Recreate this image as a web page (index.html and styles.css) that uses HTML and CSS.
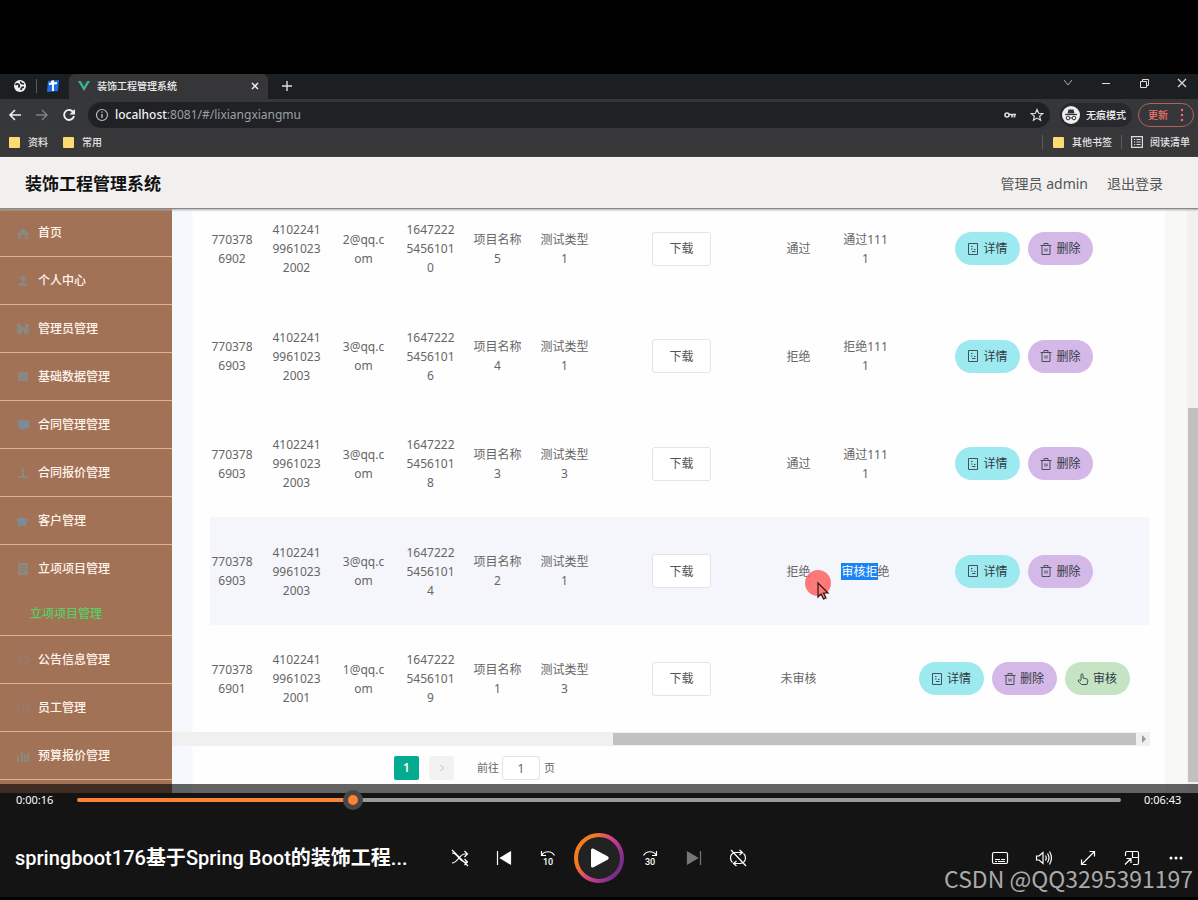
FILE: index.html
```html
<!DOCTYPE html>
<html lang="zh-CN">
<head>
<meta charset="utf-8">
<title>装饰工程管理系统</title>
<link rel="stylesheet" href="styles.css">
</head>
<body>
<div class="player">
  <div class="frame">
    <div class="tabs">
      <svg class="i14 tab-icon" viewBox="0 0 14 14"><circle cx="7" cy="7" r="6" fill="#eee"/><path d="M2.500 6c1-2 3-1 3.500 0s1 2-1 2M8 2.500c-1 2 1 2 3 2.500M8 11c0-2 1-3 3-3" stroke="#222" stroke-width="1.700" fill="none"/></svg>
      <span class="sep"></span>
      <svg class="i14 tab-icon" viewBox="0 0 14 14"><path d="M2 2l11-1-1 11-11 1z" fill="#1f6fe8"/><path d="M3 5l8-1M7 2v10M5 3l3-1" stroke="#fff" stroke-width="2" fill="none"/></svg>
      <div class="tab">
        <svg class="i14" viewBox="0 0 14 14"><path d="M1 2l6 10 6-10h-3L7 7 4 2z" fill="#41b883"/><path d="M3.500 2L7 8l3.500-6H8.500L7 4.500 5.500 2z" fill="#35495e"/></svg>
        <span class="tab-title">装饰工程管理系统</span>
        <button class="ib" aria-label="关闭标签页"><svg class="i12" viewBox="0 0 12 12"><path d="M3 3l6 6M9 3l-6 6" stroke="#eee" stroke-width="1.500"/></svg></button>
      </div>
      <button class="ib newtab" aria-label="新标签页"><svg class="i12" viewBox="0 0 12 12"><path d="M6 1v10M1 6h10" stroke="#ddd" stroke-width="1.400"/></svg></button>
      <div class="win">
        <button class="ib" aria-label="搜索标签页"><svg class="i12" viewBox="0 0 12 12"><path d="M2 3l4 5 4-5" stroke="#aaa" fill="none"/></svg></button>
        <button class="ib" aria-label="最小化"><svg class="i12" viewBox="0 0 12 12"><path d="M2 6.500h8" stroke="#ddd"/></svg></button>
        <button class="ib" aria-label="还原"><svg class="i12" viewBox="0 0 12 12"><path d="M2.500 4.500h6v6h-6zM4.500 4V2.500h6v6H9" stroke="#ddd" fill="none"/></svg></button>
        <button class="ib" aria-label="关闭"><svg class="i12" viewBox="0 0 12 12"><path d="M2 2l8 8M10 2l-8 8" stroke="#ddd" stroke-width="1.200"/></svg></button>
      </div>
    </div>
    <div class="toolbar">
      <button class="ib nav" aria-label="后退"><svg class="i14" viewBox="0 0 14 14"><path d="M13 7H2M7 2L2 7l5 5" stroke="#eee" stroke-width="1.600" fill="none"/></svg></button>
      <button class="ib nav" aria-label="前进"><svg class="i14" viewBox="0 0 14 14"><path d="M1 7h11M7 2l5 5-5 5" stroke="#808285" stroke-width="1.400" fill="none"/></svg></button>
      <button class="ib nav" aria-label="刷新"><svg class="i14" viewBox="0 0 14 14"><path d="M11.500 4.500A5 5 0 1 0 12 8" stroke="#eee" stroke-width="1.900" fill="none"/><path d="M13 1v5.500H7.500z" fill="#eee"/></svg></button>
      <div class="omni">
        <svg class="i14" viewBox="0 0 14 14"><circle cx="7" cy="7" r="5.500" stroke="#bbb" stroke-width="1.200" fill="none"/><path d="M7 6v4M7 3.500v1.300" stroke="#bbb" stroke-width="1.400"/></svg>
        <span class="url"><b>localhost</b>:8081/#/lixiangxiangmu</span>
        <svg class="i12" viewBox="0 0 12 12"><circle cx="3" cy="6" r="2" stroke="#ddd" stroke-width="1.600" fill="none"/><path d="M5 5.500h7M8 6v2.500M10.500 6v2.500" stroke="#ddd" stroke-width="1.600"/></svg>
        <svg class="i14 star" viewBox="0 0 14 14"><path d="M7 1.500l1.600 3.800 4.100.3-3.100 2.700 1 4L7 10.100l-3.600 2.200 1-4L1.300 5.600l4.100-.3z" stroke="#ddd" stroke-width="1.200" fill="none"/></svg>
      </div>
      <div class="incog">
        <svg class="i18" viewBox="0 0 18 18"><circle cx="9" cy="9" r="9" fill="#eee"/><path d="M3 8.500h12" stroke="#333" stroke-width="1.200"/><path d="M5.500 7.500l1-4h5l1 4z" fill="#333"/><circle cx="6" cy="12" r="1.800" stroke="#333" fill="none"/><circle cx="12" cy="12" r="1.800" stroke="#333" fill="none"/><path d="M8 12h2" stroke="#333"/></svg>
        <span>无痕模式</span>
      </div>
      <button class="update">更新<svg class="dots" viewBox="0 0 4 14"><circle cx="2" cy="2" r="1.200"/><circle cx="2" cy="7" r="1.200"/><circle cx="2" cy="12" r="1.200"/></svg></button>
    </div>
    <div class="marks">
      <a href="#"><i class="folder"></i>资料</a>
      <a href="#"><i class="folder"></i>常用</a>
      <span class="sep push"></span>
      <a href="#" class="other"><i class="folder"></i>其他书签</a>
      <span class="sep"></span>
      <a href="#" class="read"><svg class="i12" viewBox="0 0 12 12"><path d="M.6.6h10.800v10.800H.6zM3 3.500h1.200M5.500 3.500H9.500M3 6h1.200M5.500 6H9.500M3 8.500h1.200M5.500 8.500H9.500" stroke="#ddd" stroke-width="1.200" fill="none"/></svg>阅读清单</a>
    </div>
    <header class="head">
      <h1>装饰工程管理系统</h1>
      <span class="who">管理员 admin</span>
      <a href="#">退出登录</a>
    </header>
    <div class="body">
      <nav class="side">
        <a href="#"><svg viewBox="0 0 12 12"><path d="M6 1l6 6-1 1v4H8V8H4v4H1V8L0 7z"/></svg>首页</a>
        <a href="#"><svg viewBox="0 0 12 12"><circle cx="6" cy="3.500" r="2.800"/><path d="M1 11c0-5 10-5 10 0z"/></svg>个人中心</a>
        <a href="#"><svg viewBox="0 0 12 12"><path d="M0 1h4v3h4V1h4v3h-1v2h1v5H7V8H5v3H0V6h1V4H0z"/></svg>管理员管理</a>
        <a href="#"><svg viewBox="0 0 12 12"><path d="M1 1h10v9H1z"/></svg>基础数据管理</a>
        <a href="#"><svg class="blue" viewBox="0 0 12 12"><path d="M1 1h11v8H8v2H4V9H1z"/></svg>合同管理管理</a>
        <a href="#"><svg viewBox="0 0 12 12"><path d="M6 1l3 3H7v5h4v2H1V9h4V4H3z"/></svg>合同报价管理</a>
        <a href="#"><svg class="blue" viewBox="0 0 12 12"><path d="M0 4l6-2 1 2h5L9 7v4H1z"/></svg>客户管理</a>
        <div class="group">
          <a href="#"><svg viewBox="0 0 12 12"><path d="M1 0h10v12H1z"/><path d="M3 3h6M3 6h6M3 9h4" stroke="#9b745d"/></svg>立项项目管理</a>
          <a href="#" class="sub">立项项目管理</a>
        </div>
        <a href="#"><svg class="line" viewBox="0 0 12 12"><path d="M3 2h8v7H8l-2 2-2-2H3zM1 1v8"/></svg>公告信息管理</a>
        <a href="#"><svg class="line" viewBox="0 0 12 12"><circle cx="6" cy="6" r="5.300"/><path d="M6 3v6M4 5h4"/></svg>员工管理</a>
        <a href="#"><svg viewBox="0 0 12 12"><path d="M0 6h2v6H0zM4 1h2v11H4zM7 5h2v7H7zM10 3h2v9h-2z"/></svg>预算报价管理</a>
      </nav>
      <main class="main">
        <div class="panel">
          <table>
            <colgroup><col class="c-phone"><col class="c"><col class="c"><col class="c"><col class="c"><col class="c"><col class="c-file"><col class="c"><col class="c"><col></colgroup>
            <tbody>
              <tr><td class="ph">770378<br>6902</td><td>4102241<br>9961023<br>2002</td><td>2@qq.c<br>om</td><td>1647222<br>5456101<br>0</td><td>项目名称<br>5</td><td>测试类型<br>1</td><td><button class="dl">下载</button></td><td>通过</td><td>通过111<br>1</td><td><div class="ops"><button class="op info"><svg viewBox="0 0 12 12"><path d="M1.500.5h9v11h-9zM4 3.500h1.500M4 6h1.500M5 8.500h3.500M7 6.500h1.500"/></svg>详情</button><button class="op del"><svg viewBox="0 0 12 12"><path d="M.5 2.500h11M4 2.500v-2h4v2M2 2.500v9h8v-9M5 5.500v3M7 5.500v3"/></svg>删除</button></div></td></tr>
              <tr><td class="ph">770378<br>6903</td><td>4102241<br>9961023<br>2003</td><td>3@qq.c<br>om</td><td>1647222<br>5456101<br>6</td><td>项目名称<br>4</td><td>测试类型<br>1</td><td><button class="dl">下载</button></td><td>拒绝</td><td>拒绝111<br>1</td><td><div class="ops"><button class="op info"><svg viewBox="0 0 12 12"><path d="M1.500.5h9v11h-9zM4 3.500h1.500M4 6h1.500M5 8.500h3.500M7 6.500h1.500"/></svg>详情</button><button class="op del"><svg viewBox="0 0 12 12"><path d="M.5 2.500h11M4 2.500v-2h4v2M2 2.500v9h8v-9M5 5.500v3M7 5.500v3"/></svg>删除</button></div></td></tr>
              <tr><td class="ph">770378<br>6903</td><td>4102241<br>9961023<br>2003</td><td>3@qq.c<br>om</td><td>1647222<br>5456101<br>8</td><td>项目名称<br>3</td><td>测试类型<br>3</td><td><button class="dl">下载</button></td><td>通过</td><td>通过111<br>1</td><td><div class="ops"><button class="op info"><svg viewBox="0 0 12 12"><path d="M1.500.5h9v11h-9zM4 3.500h1.500M4 6h1.500M5 8.500h3.500M7 6.500h1.500"/></svg>详情</button><button class="op del"><svg viewBox="0 0 12 12"><path d="M.5 2.500h11M4 2.500v-2h4v2M2 2.500v9h8v-9M5 5.500v3M7 5.500v3"/></svg>删除</button></div></td></tr>
              <tr class="hover"><td class="ph">770378<br>6903</td><td>4102241<br>9961023<br>2003</td><td>3@qq.c<br>om</td><td>1647222<br>5456101<br>4</td><td>项目名称<br>2</td><td>测试类型<br>1</td><td><button class="dl">下载</button></td><td class="pointed">拒绝<svg class="pointer" viewBox="0 0 28 34"><circle cx="13" cy="13" r="13" fill="#f55" fill-opacity=".78"/><path d="M13 13v14l3-3 2.500 5 2.500-1-2.500-5H23z" fill="#f77" stroke="#311" stroke-width="1.200"/></svg></td><td><span class="sel">审核拒</span>绝</td><td><div class="ops"><button class="op info"><svg viewBox="0 0 12 12"><path d="M1.500.5h9v11h-9zM4 3.500h1.500M4 6h1.500M5 8.500h3.500M7 6.500h1.500"/></svg>详情</button><button class="op del"><svg viewBox="0 0 12 12"><path d="M.5 2.500h11M4 2.500v-2h4v2M2 2.500v9h8v-9M5 5.500v3M7 5.500v3"/></svg>删除</button></div></td></tr>
              <tr><td class="ph">770378<br>6901</td><td>4102241<br>9961023<br>2001</td><td>1@qq.c<br>om</td><td>1647222<br>5456101<br>9</td><td>项目名称<br>1</td><td>测试类型<br>3</td><td><button class="dl">下载</button></td><td>未审核</td><td></td><td><div class="ops"><button class="op info"><svg viewBox="0 0 12 12"><path d="M1.500.5h9v11h-9zM4 3.500h1.500M4 6h1.500M5 8.500h3.500M7 6.500h1.500"/></svg>详情</button><button class="op del"><svg viewBox="0 0 12 12"><path d="M.5 2.500h11M4 2.500v-2h4v2M2 2.500v9h8v-9M5 5.500v3M7 5.500v3"/></svg>删除</button><button class="op audit"><svg viewBox="0 0 12 12"><path d="M4 7V1.500q1-1.500 2 0V5l4 1q1 .5.800 2l-.8 3.500H4.500L1 8q0-1.500 1.500-1L4 8"/></svg>审核</button></div></td></tr>
            </tbody>
          </table>
          <div class="hbar"><span class="hthumb"></span><i class="arrow"></i></div>
          <div class="pager">
            <button class="pg on">1</button>
            <button class="pg" aria-label="下一页"><svg viewBox="0 0 8 8"><path d="M2.500 1l3 3-3 3" stroke="#bbb" fill="none"/></svg></button>
            <label for="goto">前往</label><input id="goto" type="text" value="1"><span>页</span>
          </div>
        </div>
        <div class="vbar"><span class="vthumb"></span></div>
      </main>
    </div>
    <div class="shade"></div>
  </div>
  <footer class="controls">
    <div class="seek">
      <span class="time">0:00:16</span>
      <input type="range" aria-label="进度" min="0" max="1000" value="260">
      <span class="time">0:06:43</span>
    </div>
    <div class="deck">
      <div class="name">springboot176<b>基于</b>Spring Boot<b>的装饰工程</b>...</div>
      <div class="btns">
        <button class="cb" aria-label="随机播放"><svg viewBox="0 0 18 18"><path d="M1 4c6 0 7 9 13 9h2M1 14c6 0 7-9 13-9h2M13.500 2l3 3-3 3M13.500 10l3 3-3 3M1 1l16 16"/></svg></button>
        <button class="cb" aria-label="上一个"><svg viewBox="0 0 18 18"><path d="M2.500 2v14"/><path d="M15.500 3v12L5.500 9z" fill="#fff"/></svg></button>
        <button class="cb" aria-label="后退10秒"><svg viewBox="0 0 18 18"><path d="M2.500 2v4.500H7M2.500 6.500c3-5 10-5 13 0"/><text x="4" y="16">10</text></svg></button>
        <button class="play" aria-label="播放"><svg viewBox="0 0 50 50"><defs><linearGradient id="ring" x1="0" y1=".2" x2="1" y2=".8"><stop offset=".2" stop-color="#f47c20"/><stop offset=".55" stop-color="#cf3d8e"/><stop offset=".9" stop-color="#7b2d8e"/></linearGradient></defs><circle cx="25" cy="25" r="23" fill="#222" stroke="url(#ring)" stroke-width="4"/><path d="M17 17v16q0 2 2 1.500l15-8q1.500-1.500 0-3l-15-8q-2-.5-2 1.500z" fill="#fff"/></svg></button>
        <button class="cb" aria-label="前进30秒"><svg viewBox="0 0 18 18"><path d="M15.500 2v4.500H11M15.500 6.500c-3-5-10-5-13 0"/><text x="4" y="16">30</text></svg></button>
        <button class="cb dim" aria-label="下一个"><svg viewBox="0 0 18 18"><path d="M15.500 2v14"/><path d="M2.500 3v12l10-6z" fill="#777"/></svg></button>
        <button class="cb" aria-label="循环"><svg viewBox="0 0 18 18"><path d="M10.500 1l3 2.500-3 2.500M13 3.500H6q-4.500 1-4.500 5.500 0 3 2 4.500M7.500 12l-3 2.500 3 2.500M5 14.500h6.500q5-1 5-5.500 0-3-2-4.500M2 1l15 16"/></svg></button>
      </div>
      <div class="btns right">
        <button class="cb" aria-label="字幕"><svg viewBox="0 0 18 18"><rect x="1.500" y="3.500" width="15" height="11" rx="1.500"/><path d="M4 10.500h5M10 10.500h4M4 12.500h2M7 12.500h7"/></svg></button>
        <button class="cb" aria-label="音量"><svg viewBox="0 0 18 18"><path d="M1.500 7v4h2.500l4 3.500v-11L4 7zM10.500 6.500q1.500 2.500 0 5M12.500 4.500q3 4.500 0 9M14.500 2.500q4 6.500 0 13"/></svg></button>
        <button class="cb" aria-label="全屏"><svg viewBox="0 0 18 18"><path d="M2.500 15.500l13-13M10.500 2.500h5v5M2.500 10.500v5h5"/></svg></button>
        <button class="cb" aria-label="迷你播放器"><svg viewBox="0 0 18 18"><path d="M2.500 7V4q0-1.500 1.500-1.500h10q1.500 0 1.500 1.500v10q0 1.500-1.500 1.500h-4M9.500 2.500v6h6M2 15.500l5.500-5.500M3.500 9.500h4.500V14"/></svg></button>
        <button class="cb" aria-label="更多"><svg viewBox="0 0 18 18"><g fill="#fff" stroke="none"><circle cx="4" cy="9" r="1.500"/><circle cx="9" cy="9" r="1.500"/><circle cx="14" cy="9" r="1.500"/></g></svg></button>
      </div>
    </div>
    <div class="mark">CSDN @QQ3295391197</div>
  </footer>
</div>
</body>
</html>
```

FILE: styles.css
```css
* { box-sizing: border-box; }
body { margin: 0; background: #000; font: 12px/20px "Noto Sans", "Noto Sans CJK SC", sans-serif; }
button, input { font: inherit; margin: 0; padding: 0; }
button { border: 0; background: none; display: inline-flex; align-items: center; justify-content: center; }
a { color: inherit; text-decoration: none; }
svg { display: block; flex: none; }
.i12 { width: 12px; height: 12px; }
.i14 { width: 14px; height: 14px; }
.i18 { width: 18px; height: 18px; }

.player { height: 100vh; padding-top: 74px; display: flex; flex-direction: column; }
.frame { flex: 1; min-height: 0; display: flex; flex-direction: column; position: relative; overflow: hidden; }
.sep { width: 1px; height: 14px; background: #5a5b5e; flex: none; }

.tabs { height: 25px; background: #1c1f21; display: flex; align-items: center; flex: none; padding-bottom: 2px; }
.tab-icon { margin: 0 9px 0 13px; }
.tab-icon + .sep { margin-right: -4px; }
.tab { width: 199px; height: 25px; padding: 0 7px 0 8px; display: flex; align-items: center; align-self: flex-start; background: #363639; border-radius: 6px 6px 0 0; color: #eee; font-size: 10px; padding-bottom: 2px; }
.tab-title { flex: 1; margin-left: 6px; font-weight: 500; }
.newtab { margin-left: 13px; }
.win { margin-left: auto; display: flex; gap: 26px; padding: 0 10px 6px 0; }

.toolbar { height: 31px; background: #36373a; display: flex; align-items: center; flex: none; padding-right: 4px; }
.nav { width: 27px; padding-left: 2px; }
.omni { flex: 1; height: 26px; margin-left: 7px; padding: 0 6px 0 7px; border-radius: 13px; background: #202124; display: flex; align-items: center; color: #9aa0a6; }
.url { flex: 1; margin-left: 6px; }
.url b { color: #f1f1f1; font-weight: 500; }
.star { margin-left: 14px; }
.incog { margin-left: 10px; height: 24px; padding: 0 6px 0 2px; display: flex; align-items: center; gap: 6px; border-radius: 12px; background: #28292c; color: #eee; font-size: 10px; font-weight: 500; }
.update { margin-left: 6px; width: 56px; height: 24px; gap: 12px; border: 1px solid #b5605c; border-radius: 12px; color: #f0746c; font-size: 10px; font-weight: 500; }
.dots { width: 4px; height: 14px; fill: #f0746c; }

.marks { height: 27px; background: #38383b; display: flex; align-items: center; flex: none; gap: 9px; padding: 0 8px 3px; color: #e4e4e4; font-size: 10px; font-weight: 500; }
.marks a { display: flex; align-items: center; gap: 8px; margin-right: 5px; }
.marks .other { margin-right: 0; }
.marks .read { margin: 0; gap: 7px; }
.marks .push { margin-left: auto; }
.folder { width: 11px; height: 11px; margin-left: 1px; background: #fbdb72; border-radius: 1px; }

.head { height: 52px; flex: none; background: #f1f0ef; display: flex; align-items: center; gap: 19px; padding: 2px 35px 0 25px; border-bottom: 1px solid #8c8888; color: #555; font-size: 14px; box-shadow: 0 1px 2px #aaa; position: relative; }
.head h1 { flex: 1; margin: 0; font-size: 17px; font-weight: 700; color: #111; }

.body { flex: 1; min-height: 0; display: flex; overflow: hidden; }
.side { width: 172px; flex: none; background: #a27256; color: #fff4ec; font-weight: 500; }
.side a { height: 48px; display: flex; align-items: center; gap: 9px; padding-left: 17px; border-bottom: 1px solid #e0b18f; }
.side svg { width: 12px; height: 12px; fill: #8a8880; }
.side .blue { fill: #7e8a98; }
.side .line { fill: none; stroke: #8f8078; }
.group { border-bottom: 1px solid #e0b18f; }
.side .group a { border: 0; }
.side .group .sub { height: 42px; padding-left: 30px; color: #57cf63; }

.main { flex: 1; min-width: 0; display: flex; background: linear-gradient(90deg, #f5f8fc 18px, #fefefe 22px); color: #666; overflow: hidden; }
.panel { flex: 1; min-width: 0; margin-top: -14px; }
table { width: calc(100% - 54px); margin-left: 38px; table-layout: fixed; border-collapse: collapse; line-height: 19px; }
.c-phone { width: 53px; }
.c { width: 67px; }
.c-file { width: 167px; }
td { padding: 0; height: 107px; text-align: center; vertical-align: middle; white-space: nowrap; }
tr:nth-child(even) td { height: 108px; }
td.ph { padding-right: 9px; }
.hover { background: #f5f6fb; }
.sel { background: #1a84f5; color: #fff; }
.pointed { position: relative; }
.pointer { position: absolute; left: 40px; top: 53px; width: 28px; height: 34px; }
.dl { width: 59px; height: 34px; border: 1px solid #e6e1ea; border-radius: 3px; background: #fff; color: #555; }
.ops { display: flex; justify-content: center; gap: 8px; }
.op { width: 65px; height: 33px; border-radius: 17px; gap: 4px; color: #33383f; }
.op svg { width: 12px; height: 12px; fill: none; stroke: #45505a; }
.info { background: #9ceaf0; }
.del { background: #d3b8e8; }
.audit { background: #c4e4c4; }

.hbar { height: 14px; width: calc(100% - 15px); background: #f0f0f0; display: flex; align-items: center; justify-content: flex-end; }
.hthumb { width: 53.5%; height: 12px; background: #c1c1c1; }
.arrow { margin: 0 4px 0 6px; border: 4px solid transparent; border-left-color: #999; border-right: 0; }
.pager { display: flex; align-items: center; margin: 10px 0 0 222px; }
.pg { width: 25px; height: 24px; margin-right: 10px; background: #f2f2f3; border-radius: 2px; }
.pg svg { width: 8px; height: 8px; }
.pg.on { background: #03ab8f; color: #fff; font-weight: 600; }
.pager label { margin: 0 3px 0 13px; font-size: 11px; }
.pager input { width: 38px; height: 24px; border: 1px solid #e2e2e6; border-radius: 3px; background: #fff; color: #666; text-align: center; margin-right: 4px; }
.pager span { font-size: 11px; }
.vbar { width: 33px; padding-left: 23px; background: linear-gradient(90deg, #f8f8f7 22px, #f1f1f1 22px); display: flex; align-items: flex-end; }
.vthumb { width: 10px; height: 64%; margin-bottom: 11px; background: #c1c1c1; }
.shade { position: absolute; left: 0; right: 0; bottom: 0; height: 9px; background: rgba(0, 0, 0, .61); }

.controls { height: 107px; flex: none; background: #141414; color: #fff; position: relative; border-bottom: 3px solid #000; }
.seek { height: 14px; display: flex; align-items: center; gap: 23px; padding: 0 16px; }
.time { font-size: 11px; width: 38px; }
.seek input { flex: 1; min-width: 0; height: 20px; background: none; appearance: none; position: relative; }
.seek input::-webkit-slider-runnable-track { height: 4px; border-radius: 2px; background: linear-gradient(90deg, #ff8133 26.4%, #999 26.4%); }
.seek input::-webkit-slider-thumb { appearance: none; width: 20px; height: 20px; margin-top: -8px; border: 5px solid #474747; border-radius: 50%; background: #ff8133; }
.deck { display: grid; grid-template-columns: 1fr auto 1fr; align-items: center; margin-top: 26px; height: 50px; }
.name { padding-left: 15px; font: 500 20px/28px Roboto, "Noto Sans CJK SC", sans-serif; white-space: nowrap; min-width: 0; }
.name b { font-weight: 700; }
.btns { display: flex; align-items: center; }
.right { justify-content: flex-end; }
.cb { width: 44px; height: 44px; }
.cb svg { width: 18px; height: 18px; fill: none; stroke: #fff; stroke-width: 1.2; }
.cb text { fill: #fff; stroke: none; font: 500 9px Roboto, sans-serif; }
.cb.dim svg { stroke: #777; }
.play { width: 58px; height: 50px; }
.play svg { width: 50px; height: 50px; }
.mark { position: absolute; right: 5px; bottom: 3px; font: 23px/32px "Noto Sans CJK SC", sans-serif; color: #aaa; }
```
